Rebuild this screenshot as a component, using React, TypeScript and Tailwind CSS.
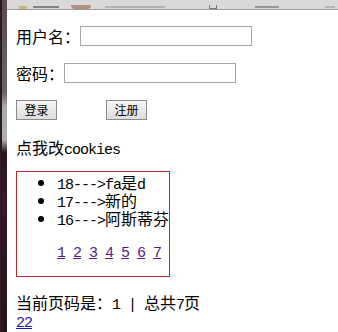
const mono = "[font-family:'Liberation_Mono','DejaVu_Sans_Mono',monospace] text-[15px] tracking-[-1px] leading-[18px]";

function M({ children }: { children: React.ReactNode }) {
  return <span className={mono}>{children}</span>;
}

function TabStrip() {
  return (
    <div className="h-[10px] shrink-0 bg-[#d9d9d9] border-b border-[#9c9c9c] flex items-end gap-[6px] pl-[12px] overflow-hidden">
      <div className="w-[8px] h-[3px] bg-[#c9a25a] opacity-70" />
      <div className="w-[26px] h-[2px] bg-[#4a4a4a] opacity-60 mb-[1px]" />
      <div className="w-[20px] h-[4px] bg-[#9a5a40] opacity-60 rounded-b-full ml-[6px]" />
      <div className="w-[60px] h-[2px] bg-[#777] opacity-40 mb-[1px] ml-[8px]" />
      <div className="w-[8px] h-[4px] border border-t-0 border-[#777] ml-[38px]" />
      <div className="w-[24px] h-[2px] bg-[#555] opacity-50 mb-[1px] ml-[32px]" />
      <div className="w-[10px] h-[2px] bg-[#777] opacity-40 mb-[1px] ml-[40px]" />
    </div>
  );
}

export default function App() {
  return (
    <div className="w-[338px] h-[332px] flex overflow-hidden bg-white text-black [font-family:'Noto_Sans_CJK_SC',sans-serif] text-[16px] leading-[18px]">
      <div className="w-[7px] shrink-0 flex">
        <div className="w-[2px] bg-[#2b1a22]" />
        <div className="flex-1 bg-[linear-gradient(to_bottom,#5a4a52_0%,#6e6268_28%,#a9a9a9_32%,#b0b0b0_42%,#2a1520_46%,#3a1630_62%,#2c1522_80%,#25131d_100%)]" />
      </div>
      <div className="flex-1 flex flex-col min-h-0">
        <TabStrip />
        <div className="pl-[9px] pt-[16px] flex flex-col shrink-0 whitespace-nowrap">
          <div className="flex items-center h-[20px]">
            <span>用户名：</span>
            <input className="w-[172px] h-[20px] border border-[#a5a5a5] bg-white outline-none" />
          </div>
          <div className="flex items-center h-[20px] mt-[17px]">
            <span>密码：</span>
            <input className="w-[172px] h-[20px] border border-[#a5a5a5] bg-white outline-none" />
          </div>
          <div className="flex items-center h-[20px] mt-[17px] gap-[49px]">
            <button className="w-[41px] h-[20px] text-[12px] leading-none border border-[#8c8c8c] bg-[linear-gradient(to_bottom,#f6f6f6,#dedede)]">
              登录
            </button>
            <button className="w-[41px] h-[20px] text-[12px] leading-none border border-[#8c8c8c] bg-[linear-gradient(to_bottom,#f6f6f6,#dedede)]">
              注册
            </button>
          </div>
          <div className="mt-[18px] h-[18px]">
            点我改<M>cookies</M>
          </div>
          <div className="mt-[15px] w-[154px] border border-[#c0282e] pb-[13px]">
            <ul className="list-disc pl-[40px] mt-[1px]">
              <li className="h-[18px] whitespace-nowrap">
                <M>18---&gt;fa</M>是<M>d</M>
              </li>
              <li className="h-[18px] whitespace-nowrap">
                <M>17---&gt;</M>新的
              </li>
              <li className="h-[18px] whitespace-nowrap">
                <M>16---&gt;</M>阿斯蒂芬
              </li>
            </ul>
            <div className="mt-[18px] h-[18px] pl-[40px] flex gap-[8px]">
              {["1", "2", "3", "4", "5", "6", "7"].map((n) => (
                <a key={n} href="#" className={mono + " text-[#551a8b] underline"}>
                  {n}
                </a>
              ))}
            </div>
          </div>
          <div className="mt-[16px] h-[18px]">
            当前页码是：<M>1 | </M>总共<M>7</M>页
          </div>
          <div className="h-[17px]">
            <a href="#" className={mono + " text-[#1c1ca8] underline"}>
              22
            </a>
          </div>
        </div>
      </div>
    </div>
  );
}
